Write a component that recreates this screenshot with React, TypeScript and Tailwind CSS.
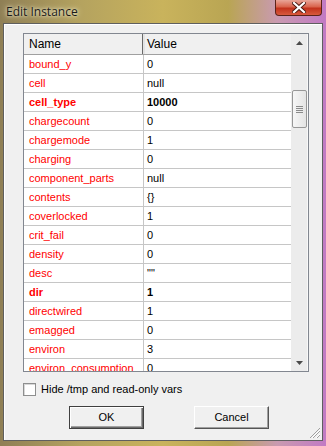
/**
 * Edit Instance dialog
 *
 * A Win7-style variable editor with a name/value list.
 */

interface VarRow {
  name: string;
  value: string;
  bold?: boolean;
}

const rows: VarRow[] = [
  { name: 'bound_y', value: '0' },
  { name: 'cell', value: 'null' },
  { name: 'cell_type', value: '10000', bold: true },
  { name: 'chargecount', value: '0' },
  { name: 'chargemode', value: '1' },
  { name: 'charging', value: '0' },
  { name: 'component_parts', value: 'null' },
  { name: 'contents', value: '{}' },
  { name: 'coverlocked', value: '1' },
  { name: 'crit_fail', value: '0' },
  { name: 'density', value: '0' },
  { name: 'desc', value: '""' },
  { name: 'dir', value: '1', bold: true },
  { name: 'directwired', value: '1' },
  { name: 'emagged', value: '0' },
  { name: 'environ', value: '3' },
  { name: 'environ_consumption', value: '0' },
];

const App: React.FC = () => {
  return (
    <div
      className="w-[326px] h-[446px] flex flex-col overflow-hidden bg-[linear-gradient(90deg,#8f7f55_0%,#b5a35f_25%,#c9b35c_50%,#b9a553_70%,#c99ab0_85%,#c27ac4_100%)] text-[11px] text-black"
      style={{ fontFamily: '"Liberation Sans", Arial, sans-serif' }}
    >
      {/* Title bar */}
      <div className="h-[23px] flex items-start justify-between shrink-0">
        <span
          className="pl-[6px] pt-[3px] text-[12px] text-[#1a1a1a] [text-shadow:0_0_6px_#f6f0d0,0_0_3px_#f6f0d0]"
          style={{ fontFamily: '"Open Sans", "Liberation Sans", sans-serif' }}
        >
          Edit Instance
        </span>
        <div className="mr-[4px] w-[47px] h-[16px] rounded-b-[4px] border border-t-0 border-[#5c2318] bg-[linear-gradient(180deg,#e9a598_0%,#d9644d_45%,#c2321c_55%,#d85a3e_100%)] flex items-center justify-center">
          <svg width="14" height="11" viewBox="0 0 14 11">
            <path d="M2 1 L12 10 M12 1 L2 10" stroke="#4a1a12" strokeWidth="4" strokeLinecap="square" />
            <path d="M2 1 L12 10 M12 1 L2 10" stroke="#ffffff" strokeWidth="2.2" strokeLinecap="square" />
          </svg>
        </div>
      </div>

      {/* Client area */}
      <div className="ml-[3px] w-[320px] h-[418px] border border-[#5f5f5f] bg-[#f0f0f0] relative">
        <div className="border-t border-l border-white h-full pl-[18px] pt-[8px]">
          {/* List box */}
          <div className="w-[286px] h-[339px] border border-[#828790] bg-white flex">
            <div className="w-[267px] h-full overflow-hidden flex flex-col">
              {/* Header */}
              <div className="h-[21px] shrink-0 flex bg-[#f0f0f0] border-b border-[#a0a0a0] text-[12px]">
                <div className="w-[119px] pl-[5px] flex items-center border-r border-[#696969]">Name</div>
                <div className="flex-1 pl-[2px] flex items-center border-l-2 border-[#e3e3e3]">Value</div>
              </div>
              {/* Rows */}
              {rows.map((row) => (
                <div key={row.name} className="h-[19px] shrink-0 flex border-b border-[#c6c6c6]">
                  <div
                    className={`w-[120px] pl-[5px] flex items-center border-r border-[#c6c6c6] text-[#ff0000] whitespace-nowrap ${
                      row.bold ? 'font-bold' : ''
                    }`}
                  >
                    {row.name}
                  </div>
                  <div className={`flex-1 pl-[3px] flex items-center ${row.bold ? 'font-bold' : ''}`}>
                    {row.value}
                  </div>
                </div>
              ))}
            </div>

            {/* Scrollbar */}
            <div className="w-[17px] h-full bg-[#ececec] border-r border-[#f8f8f8] flex flex-col items-center">
              <div className="h-[17px] w-full flex items-center justify-center">
                <svg width="7" height="4" viewBox="0 0 7 4">
                  <path d="M3.5 0 L7 4 L0 4 Z" fill="#4a4a4a" />
                </svg>
              </div>
              <div className="mt-[39px] w-[15px] h-[38px] rounded-[2px] border border-[#979797] bg-[linear-gradient(90deg,#f6f6f6,#e4e4e4)] flex flex-col items-center justify-center gap-[1px]">
                <div className="w-[7px] h-[1px] bg-[#8a8a8a]" />
                <div className="w-[7px] h-[1px] bg-[#8a8a8a]" />
                <div className="w-[7px] h-[1px] bg-[#8a8a8a]" />
                <div className="w-[7px] h-[1px] bg-[#8a8a8a]" />
              </div>
              <div className="flex-1" />
              <div className="h-[17px] w-full flex items-center justify-center">
                <svg width="7" height="4" viewBox="0 0 7 4">
                  <path d="M0 0 L7 0 L3.5 4 Z" fill="#4a4a4a" />
                </svg>
              </div>
            </div>
          </div>

          {/* Checkbox */}
          <label className="mt-[11px] h-[13px] flex items-center gap-[5px] leading-none">
            <span className="w-[13px] h-[13px] border border-[#8e8f8f] bg-white shadow-[inset_1px_1px_0_#d8d8d8]" />
            <span>Hide /tmp and read-only vars</span>
          </label>

          {/* Buttons */}
          <div className="mt-[10px] flex gap-[50px] pl-[46px]">
            <button className="w-[75px] h-[23px] border border-[#404040] bg-[#f0f0f0] shadow-[inset_1px_1px_0_#ffffff,inset_-1px_-1px_0_#6b6b6b,inset_-2px_-2px_0_#a0a0a0] text-[11px] leading-none">
              OK
            </button>
            <button className="w-[75px] h-[23px] border-t border-l border-[#ffffff] border-r border-b border-r-[#555555] border-b-[#555555] bg-[#f0f0f0] shadow-[inset_-1px_-1px_0_#a0a0a0] text-[11px] leading-none">
              Cancel
            </button>
          </div>
        </div>

        {/* Size grip */}
        <svg className="absolute right-[1px] bottom-[1px]" width="12" height="12" viewBox="0 0 12 12">
          <path d="M11 3 L3 11 M11 7 L7 11" stroke="#ffffff" strokeWidth="1" />
          <path d="M11 4 L4 11 M11 8 L8 11" stroke="#a0a0a0" strokeWidth="1" />
          <path d="M11 1 L1 11" stroke="#a0a0a0" strokeWidth="1" />
        </svg>
      </div>
    </div>
  );
};

export default App;
